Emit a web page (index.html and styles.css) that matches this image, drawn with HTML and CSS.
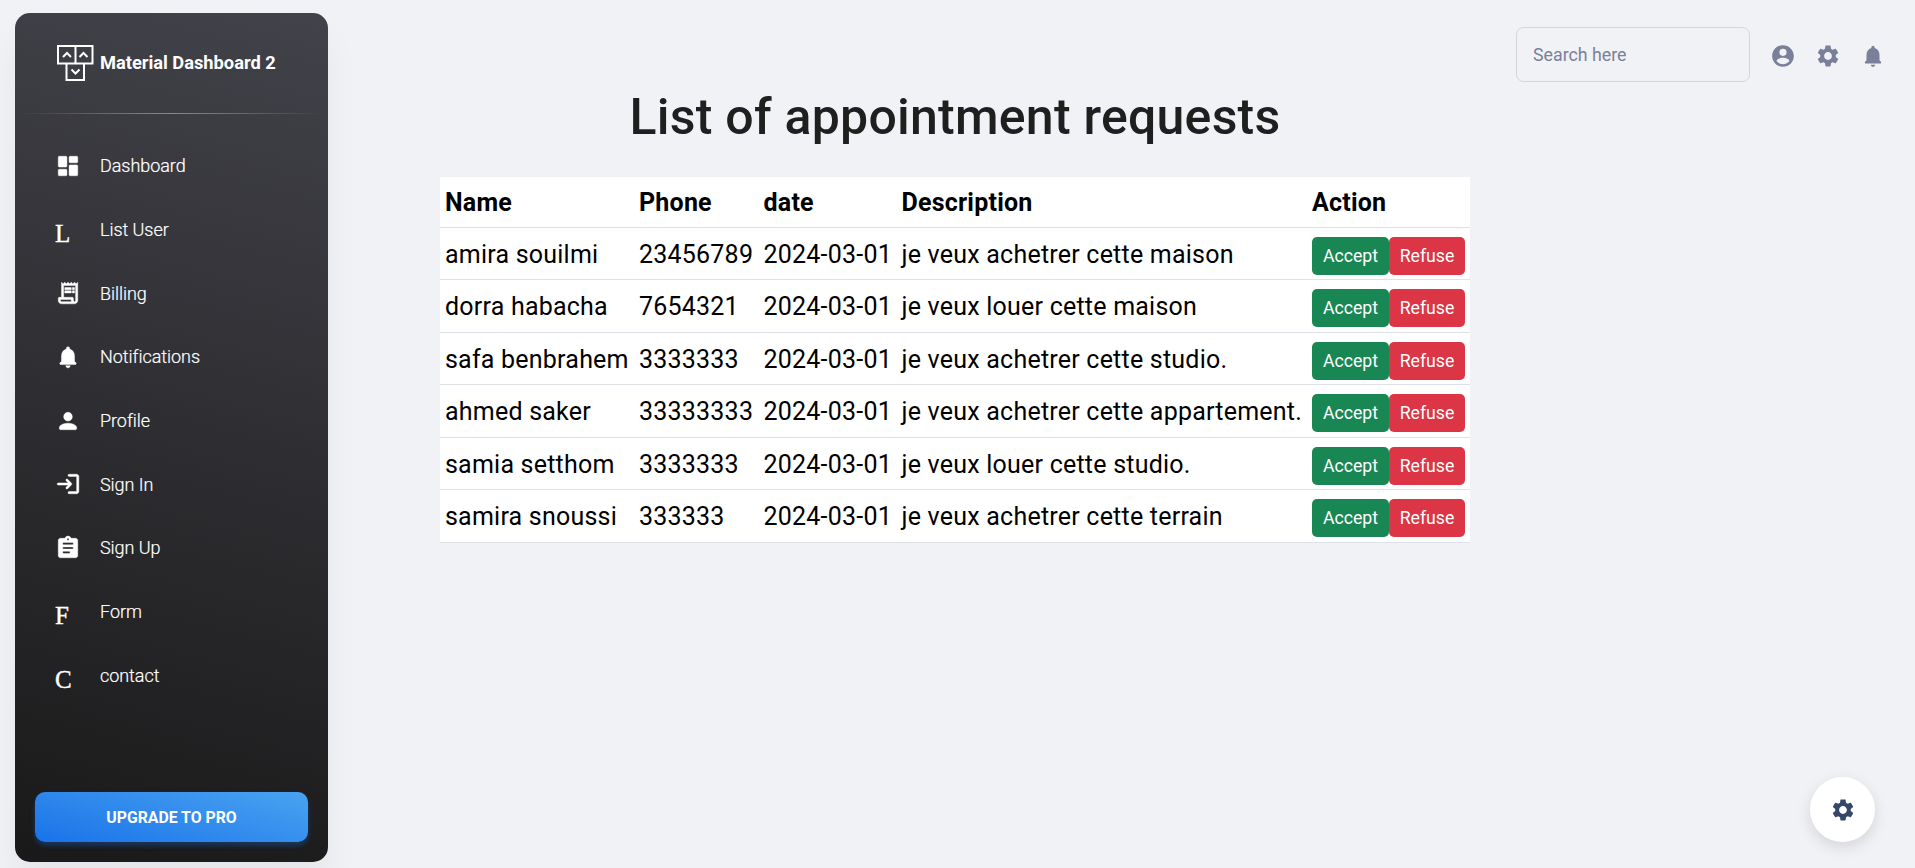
FILE: index.html
```html
<!DOCTYPE html>
<html lang="en">
<head>
<meta charset="utf-8">
<title>Material Dashboard 2</title>
<link rel="stylesheet" href="styles.css">
</head>
<body>
<svg class="sprite" aria-hidden="true">
  <symbol id="i-dashboard" viewBox="0 0 24 24"><path d="M4 13h6c.55 0 1-.45 1-1V4c0-.55-.45-1-1-1H4c-.55 0-1 .45-1 1v8c0 .55.45 1 1 1zm0 8h6c.55 0 1-.45 1-1v-4c0-.55-.45-1-1-1H4c-.55 0-1 .45-1 1v4c0 .55.45 1 1 1zm10 0h6c.55 0 1-.45 1-1v-8c0-.55-.45-1-1-1h-6c-.55 0-1 .45-1 1v8c0 .55.45 1 1 1zM13 4v4c0 .55.45 1 1 1h6c.55 0 1-.45 1-1V4c0-.55-.45-1-1-1h-6c-.55 0-1 .45-1 1z"/></symbol>
  <symbol id="i-receipt" viewBox="0 0 24 24"><path d="M19.5 3.5L18 2l-1.5 1.5L15 2l-1.5 1.5L12 2l-1.5 1.5L9 2 7.5 3.5 6 2v14H4c-.55 0-1 .45-1 1v2c0 1.66 1.34 3 3 3h12c1.66 0 3-1.34 3-3V2l-1.5 1.5zM15 20H6c-.55 0-1-.45-1-1v-1h10v2zm4-1c0 .55-.45 1-1 1s-1-.45-1-1v-2c0-.55-.45-1-1-1H8V5h11v14zM9 7h6v2H9zM16 7h2v2h-2zM9 10h6v2H9zM16 10h2v2h-2z"/></symbol>
  <symbol id="i-bell" viewBox="0 0 24 24"><path d="M12 22c1.1 0 2-.9 2-2h-4c0 1.1.89 2 2 2zm6-6v-5c0-3.07-1.64-5.64-4.5-6.32V4c0-.83-.67-1.5-1.5-1.5s-1.5.67-1.5 1.5v.68C7.63 5.36 6 7.92 6 11v5l-1.29 1.29c-.63.63-.19 1.71.7 1.71h13.17c.89 0 1.34-1.08.71-1.71L18 16z"/></symbol>
  <symbol id="i-person" viewBox="0 0 24 24"><path d="M12 12c2.21 0 4-1.79 4-4s-1.79-4-4-4-4 1.79-4 4 1.79 4 4 4zm0 2c-2.67 0-8 1.34-8 4v1c0 .55.45 1 1 1h14c.55 0 1-.45 1-1v-1c0-2.66-5.33-4-8-4z"/></symbol>
  <symbol id="i-login" viewBox="0 0 24 24"><path d="M10.3 7.7c-.39.39-.39 1.01 0 1.4l1.9 1.9H3c-.55 0-1 .45-1 1s.45 1 1 1h9.2l-1.9 1.9c-.39.39-.39 1.01 0 1.4.39.39 1.01.39 1.4 0l3.59-3.59c.39-.39.39-1.02 0-1.41L11.7 7.7c-.39-.39-1.01-.39-1.4 0zM20 19h-7c-.55 0-1 .45-1 1s.45 1 1 1h7c1.1 0 2-.9 2-2V5c0-1.1-.9-2-2-2h-7c-.55 0-1 .45-1 1s.45 1 1 1h7v14z"/></symbol>
  <symbol id="i-assignment" viewBox="0 0 24 24"><path d="M19 3h-4.180C14.4 1.840 13.3 1 12 1s-2.400.840-2.820 2H5c-1.100 0-2 .9-2 2v14c0 1.100.9 2 2 2h14c1.100 0 2-.9 2-2V5c0-1.100-.9-2-2-2zm-7 0c.55 0 1 .45 1 1s-.45 1-1 1-1-.45-1-1 .45-1 1-1zm1 14H8c-.55 0-1-.45-1-1s.45-1 1-1h5c.55 0 1 .45 1 1s-.45 1-1 1zm3-4H8c-.55 0-1-.45-1-1s.45-1 1-1h8c.55 0 1 .45 1 1s-.45 1-1 1zm0-4H8c-.55 0-1-.45-1-1s.45-1 1-1h8c.55 0 1 .45 1 1s-.45 1-1 1z"/></symbol>
  <symbol id="i-account" viewBox="0 0 24 24"><path d="M12 2C6.480 2 2 6.480 2 12s4.480 10 10 10 10-4.480 10-10S17.520 2 12 2zm0 3.300a3.300 3.300 0 0 1 0 6.600 3.300 3.300 0 0 1 0-6.600zm0 14.200c-2.400 0-4.650-1-6-2.900.5-1.950 3.900-2.900 6-2.900s5.500.95 6 2.900c-1.350 1.900-3.600 2.900-6 2.900z"/></symbol>
  <symbol id="i-gear" viewBox="0 0 24 24"><path d="M19.140 12.940c.04-.3.06-.61.06-.94 0-.32-.02-.64-.07-.94l2.030-1.580c.18-.14.23-.41.12-.61l-1.920-3.320c-.12-.22-.37-.29-.59-.22l-2.390.96c-.5-.38-1.030-.7-1.620-.94l-.36-2.540c-.04-.24-.24-.41-.48-.41h-3.840c-.24 0-.43.17-.47.41l-.36 2.540c-.59.24-1.130.57-1.620.94l-2.390-.96c-.22-.08-.47 0-.59.22L2.740 8.870c-.12.21-.08.47.12.61l2.030 1.580c-.05.3-.09.63-.09.94s.02.64.07.94l-2.030 1.580c-.18.14-.23.41-.12.61l1.920 3.320c.12.22.37.29.59.22l2.390-.96c.5.38 1.030.7 1.620.94l.36 2.540c.05.24.24.41.48.41h3.840c.24 0 .44-.17.47-.41l.36-2.540c.59-.24 1.130-.56 1.620-.94l2.390.96c.22.08.47 0 .59-.22l1.920-3.320c.12-.22.07-.47-.12-.61l-2.010-1.580zM12 15.600c-1.980 0-3.600-1.620-3.600-3.600s1.620-3.600 3.600-3.600 3.600 1.620 3.600 3.600-1.620 3.600-3.600 3.600z"/></symbol>
</svg>
<div class="app">
  <aside class="sidebar">
    <div class="brand">
      <svg class="logo" viewBox="0 0 38 38"><path d="M2 2h17.500v17.500H2zM19.500 2H36.500v17.500H19.500zM10.500 19.500h17.500v16.500h-17.500z"/><path d="M7 13l4-4 4 4M23.500 13l4-4 4 4M15.500 25.500l4 4 4-4"/></svg>
      <span>Material Dashboard 2</span>
    </div>
    <div class="divider"></div>
    <nav class="nav">
      <a class="item"><svg class="icon"><use href="#i-dashboard"/></svg><span>Dashboard</span></a>
      <a class="item"><b class="letter">L</b><span>List User</span></a>
      <a class="item"><svg class="icon"><use href="#i-receipt"/></svg><span>Billing</span></a>
      <a class="item"><svg class="icon"><use href="#i-bell"/></svg><span>Notifications</span></a>
      <a class="item"><svg class="icon"><use href="#i-person"/></svg><span>Profile</span></a>
      <a class="item"><svg class="icon"><use href="#i-login"/></svg><span>Sign In</span></a>
      <a class="item"><svg class="icon"><use href="#i-assignment"/></svg><span>Sign Up</span></a>
      <a class="item"><b class="letter">F</b><span>Form</span></a>
      <a class="item"><b class="letter">C</b><span>contact</span></a>
    </nav>
    <button class="upgrade">UPGRADE TO PRO</button>
  </aside>
  <div class="page">
    <header class="topbar">
      <input class="search" type="text" placeholder="Search here">
      <svg class="icon"><use href="#i-account"/></svg>
      <svg class="icon"><use href="#i-gear"/></svg>
      <svg class="icon"><use href="#i-bell"/></svg>
    </header>
    <main class="content">
      <h1 class="title">List of appointment requests</h1>
      <table class="requests">
        <colgroup><col class="c-name"><col class="c-phone"><col class="c-date"><col class="c-desc"><col class="c-action"></colgroup>
        <thead><tr><th>Name</th><th>Phone</th><th>date</th><th>Description</th><th>Action</th></tr></thead>
        <tbody>
          <tr><td>amira souilmi</td><td>23456789</td><td>2024-03-01</td><td>je veux achetrer cette maison</td><td><div class="actions"><button class="btn accept">Accept</button><button class="btn refuse">Refuse</button></div></td></tr>
          <tr><td>dorra habacha</td><td>7654321</td><td>2024-03-01</td><td>je veux louer cette maison</td><td><div class="actions"><button class="btn accept">Accept</button><button class="btn refuse">Refuse</button></div></td></tr>
          <tr><td>safa benbrahem</td><td>3333333</td><td>2024-03-01</td><td>je veux achetrer cette studio.</td><td><div class="actions"><button class="btn accept">Accept</button><button class="btn refuse">Refuse</button></div></td></tr>
          <tr><td>ahmed saker</td><td>33333333</td><td>2024-03-01</td><td>je veux achetrer cette appartement.</td><td><div class="actions"><button class="btn accept">Accept</button><button class="btn refuse">Refuse</button></div></td></tr>
          <tr><td>samia setthom</td><td>3333333</td><td>2024-03-01</td><td>je veux louer cette studio.</td><td><div class="actions"><button class="btn accept">Accept</button><button class="btn refuse">Refuse</button></div></td></tr>
          <tr><td>samira snoussi</td><td>333333</td><td>2024-03-01</td><td>je veux achetrer cette terrain</td><td><div class="actions"><button class="btn accept">Accept</button><button class="btn refuse">Refuse</button></div></td></tr>
        </tbody>
      </table>
    </main>
  </div>
</div>
<button class="fab" aria-label="Settings"><svg class="icon"><use href="#i-gear"/></svg></button>
</body>
</html>
```
FILE: styles.css
```css
* { box-sizing: border-box; }
body { margin: 0; background: #f0f2f5; font-family: Roboto, "Liberation Sans", sans-serif; overflow: hidden; }
button { font-family: inherit; border: 0; }
.sprite { display: none; }
.icon { width: 26px; height: 26px; fill: currentColor; flex: none; display: block; }
.app { display: flex; height: 868px; }

.sidebar {
  flex: none; width: 313px; height: 849px; margin: 13px 0 0 15px;
  display: flex; flex-direction: column; color: #fff; border-radius: 15px;
  background: linear-gradient(195deg, #42424a, #191919);
  box-shadow: 0 25px 34px rgba(0, 0, 0, .05);
}
.brand { display: flex; align-items: center; height: 100px; padding-left: 41px; font-size: 18.3px; font-weight: 700; }
.brand span { margin-left: 6px; padding-bottom: 2px; letter-spacing: -.02px; }
.logo { width: 38px; height: 38px; fill: none; stroke: #fff; stroke-width: 2; }
.divider { height: 1px; margin: 0 5px; background: linear-gradient(to right, rgba(255,255,255,0), rgba(255,255,255,.4), rgba(255,255,255,0)); }
.nav { padding-top: 20px; flex: 1; }
.item { display: flex; align-items: center; height: 63.7px; padding-left: 40px; font-size: 18px; font-weight: 300; }
.item .icon { stroke: #fff; stroke-width: .4; }
.item span { margin-left: 19px; letter-spacing: -.05px; -webkit-text-stroke: .2px #fff; }
.item .letter + span { margin-left: 19px; }
.letter { width: 26px; font: 400 25px/30px "Liberation Serif", serif; padding-top: 9px; -webkit-text-stroke: .4px #fff; }
.upgrade {
  height: 50px; margin: 0 20px 20px; border-radius: 10px; color: #fff;
  font-size: 15.8px; font-weight: 700; background: linear-gradient(195deg, #49a3f1, #1a73e8);
  box-shadow: 0 4px 4px rgba(26,115,232,.15), 0 3px 6px rgba(26,115,232,.2);
}

.page { flex: 1; }
.topbar { display: flex; align-items: center; justify-content: flex-end; height: 82px; padding: 27px 29px 0 0; gap: 19px; color: #7b809a; }
.topbar .icon { margin-top: 3px; }
.search { width: 234px; height: 55px; padding: 0 16px; margin-right: 1px; border: 1px solid #d2d6da; border-radius: 7.5px; background: transparent; font: 400 17.8px Roboto, sans-serif; }
.search::placeholder { color: #7b809a; opacity: 1; }
.content { width: 1030px; margin-left: 112px; }
.title { margin: 5px 0 30px; font-size: 50px; line-height: 60px; font-weight: 500; letter-spacing: .25px; text-align: center; color: #1f1f1f; }
.requests { width: 1030px; table-layout: fixed; border-collapse: collapse; background: #fff; color: #000; font-size: 25px; letter-spacing: .22px; }
.c-name { width: 194px; }
.c-phone { width: 124.5px; }
.c-date { width: 138px; }
.c-desc { width: 410.500px; }
.c-action { width: 163px; }
.requests th, .requests td { padding: 0 5px; text-align: left; white-space: nowrap; border-bottom: 1px solid #dee2e6; }
.requests th { height: 50.4px; padding-top: 1px; font-weight: 700; }
.requests td { height: 52.5px; padding-top: 1px; }
.actions { display: flex; padding-top: 3.5px; }
.btn { height: 38px; padding: 0; border-radius: 5px; color: #fff; font-size: 17.7px; }
.accept { width: 77px; background: #198754; }
.refuse { width: 76px; background: #dc3545; }

.fab {
  position: fixed; right: 40px; bottom: 26px; width: 65px; height: 65px; border-radius: 50%;
  display: flex; align-items: center; justify-content: center; background: #fff; color: #344767;
  box-shadow: 0 5px 15px rgba(0,0,0,.12);
}
```
